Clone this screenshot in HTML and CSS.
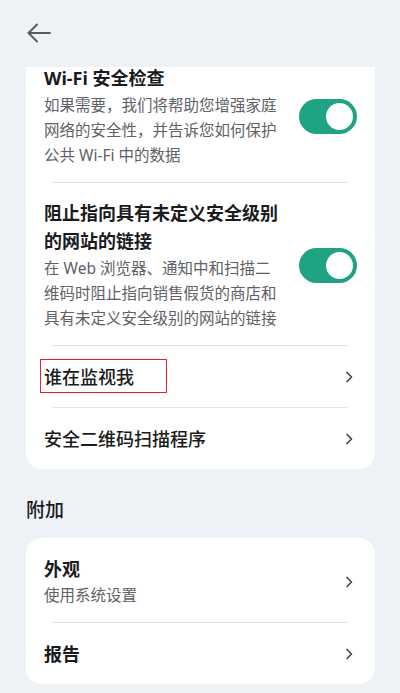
FILE: index.html
```html
<!DOCTYPE html>
<html lang="zh-CN">
<head>
    <meta charset="UTF-8">
    <meta name="viewport" content="width=device-width, initial-scale=1.0">
    <title>安全设置</title>
    <link rel="stylesheet" href="styles.css">
</head>
<body>
    <div class="header">
        <svg class="back" width="24" height="20" viewBox="0 0 24 20">
            <path d="M23 10H2M10 1.5L1.5 10L10 18.5" fill="none" stroke="#5b5c60" stroke-width="2" stroke-linecap="round" stroke-linejoin="round"/>
        </svg>
    </div>

    <div class="page">
        <div class="card card-top">
            <div class="row row-first">
                <div class="row-text">
                    <div class="title">Wi-Fi 安全检查</div>
                    <div class="desc">如果需要，我们将帮助您增强家庭网络的安全性，并告诉您如何保护公共 Wi-Fi 中的数据</div>
                </div>
                <div class="switch on"><span class="knob"></span></div>
            </div>
            <div class="divider"></div>
            <div class="row">
                <div class="row-text">
                    <div class="title">阻止指向具有未定义安全级别的网站的链接</div>
                    <div class="desc">在 Web 浏览器、通知中和扫描二维码时阻止指向销售假货的商店和具有未定义安全级别的网站的链接</div>
                </div>
                <div class="switch on"><span class="knob"></span></div>
            </div>
            <div class="divider"></div>
            <div class="row nav">
                <div class="label"><span class="marked">谁在监视我</span></div>
                <svg class="chevron" width="8" height="12" viewBox="0 0 8 12"><path d="M2 1.5L6.5 6L2 10.5" fill="none" stroke="#4a4b50" stroke-width="1.7" stroke-linecap="round" stroke-linejoin="round"/></svg>
            </div>
            <div class="divider"></div>
            <div class="row nav">
                <div class="label">安全二维码扫描程序</div>
                <svg class="chevron" width="8" height="12" viewBox="0 0 8 12"><path d="M2 1.5L6.5 6L2 10.5" fill="none" stroke="#4a4b50" stroke-width="1.7" stroke-linecap="round" stroke-linejoin="round"/></svg>
            </div>
        </div>

        <h3 class="section">附加</h3>

        <div class="card">
            <div class="row row-sub">
                <div class="row-text">
                    <div class="title">外观</div>
                    <div class="desc">使用系统设置</div>
                </div>
                <svg class="chevron" width="8" height="12" viewBox="0 0 8 12"><path d="M2 1.5L6.5 6L2 10.5" fill="none" stroke="#4a4b50" stroke-width="1.7" stroke-linecap="round" stroke-linejoin="round"/></svg>
            </div>
            <div class="divider"></div>
            <div class="row nav">
                <div class="title">报告</div>
                <svg class="chevron" width="8" height="12" viewBox="0 0 8 12"><path d="M2 1.5L6.5 6L2 10.5" fill="none" stroke="#4a4b50" stroke-width="1.7" stroke-linecap="round" stroke-linejoin="round"/></svg>
            </div>
        </div>
    </div>
</body>
</html>
```

FILE: styles.css
```css
body {
    margin: 0;
    padding: 0;
    background-color: #eef1f6;
    font-family: "Noto Sans", "Noto Sans CJK SC", sans-serif;
    color: #1b1b1d;
    width: 400px;
    height: 693px;
    overflow: hidden;
}
.header {
    height: 67px;
    display: flex;
    align-items: center;
    padding-left: 27px;
    box-sizing: border-box;
    padding-bottom: 2px;
}
.back {
    display: block;
}
.page {
    padding: 0 25px 0 26px;
}
.card {
    background-color: #fff;
    border-radius: 16px;
    overflow: hidden;
}
.card-top {
    border-radius: 0 0 16px 16px;
}
.row {
    display: flex;
    align-items: center;
    justify-content: space-between;
    padding: 16px 18px 14px 18px;
}
.row-first {
    margin-top: -3px;
    padding-top: 0;
}
.row-sub {
    padding-top: 17px;
}
.row-sub .desc {
    margin-top: 0;
}
.row-text {
    width: 236px;
}
.title {
    font-size: 18px;
    font-weight: 700;
    line-height: 28px;
}
.desc {
    font-size: 15.5px;
    line-height: 25px;
    color: #606166;
    margin-top: 1px;
}
.nav {
    padding-top: 16.5px;
    padding-bottom: 16.5px;
}
.label {
    font-size: 18px;
    font-weight: 500;
    line-height: 28px;
}
.marked {
    position: relative;
}
.marked::after {
    content: "";
    position: absolute;
    left: -4px;
    right: -33px;
    top: -6px;
    bottom: -4px;
    border: 1.5px solid #e0262b;
}
.chevron {
    display: block;
    margin-right: 4px;
}
.divider {
    height: 1px;
    background-color: #e2e3e7;
    margin: 0 27px 0 26px;
}
.switch {
    width: 58px;
    height: 35px;
    border-radius: 18px;
    background-color: #1fa384;
    position: relative;
    flex-shrink: 0;
}
.switch .knob {
    position: absolute;
    width: 27px;
    height: 27px;
    border-radius: 50%;
    background-color: #fff;
    top: 4px;
    right: 4px;
}
.section {
    margin: 27px 0 14px 0;
    font-size: 19px;
    font-weight: 500;
    line-height: 28px;
}
```
